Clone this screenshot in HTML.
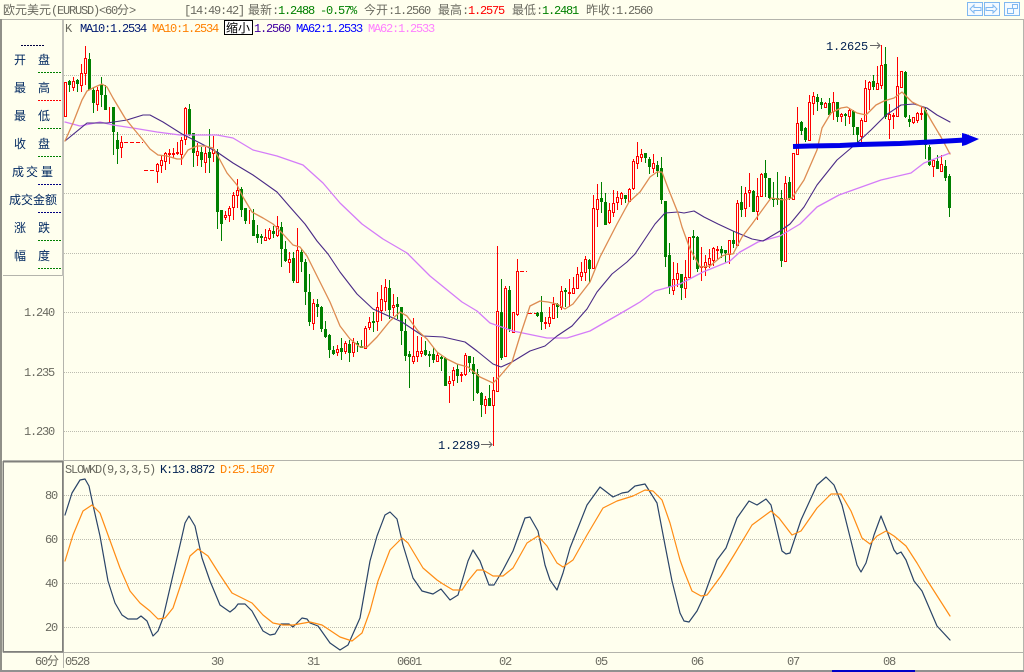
<!DOCTYPE html>
<html lang="zh">
<head>
<meta charset="utf-8">
<title>欧元美元(EURUSD)</title>
<style>
html,body{margin:0;padding:0;background:#ffffee;width:1024px;height:672px;overflow:hidden}
svg{display:block;position:absolute;left:0;top:0}
polyline{stroke-linejoin:round;stroke-linecap:round}
.m{font-family:"Liberation Mono","DejaVu Sans Mono",monospace;font-size:12px;letter-spacing:-1.2px}
.c{font-family:"WenQuanYi Zen Hei","Noto Sans CJK SC",sans-serif;font-size:12px}
.g{fill:#6a6a60}
.n{fill:#002050}
</style>
</head>
<body>
<svg width="1024" height="672" viewBox="0 0 1024 672" xmlns="http://www.w3.org/2000/svg">
<rect width="1024" height="672" fill="#ffffee"/>

<!-- frame -->
<g shape-rendering="crispEdges" fill="none" stroke="#b4b4ac">
<path d="M0 19.5H1024"/>
<path d="M63.5 20V652"/>
<path d="M3 275.5H63"/>
<path d="M3 460.5H1024"/>
<path d="M3 652.5H1024"/>
<path d="M63.5 652V668"/>
<path d="M1023.5 20V670"/>
</g>
<g shape-rendering="crispEdges">
<rect x="0" y="19" width="2" height="653" fill="#909088"/>
<rect x="62" y="20" width="2" height="256" fill="#c0c0b8"/>
<rect x="0" y="670" width="1024" height="2" fill="#909090"/>
<rect x="832" y="670" width="83" height="2" fill="#0000c8"/>
<rect x="3" y="461.5" width="59.5" height="190" fill="none" stroke="#80807c" stroke-width="1.5"/>
</g>

<!-- grid -->
<g fill="none" stroke="#bcbcb0" stroke-dasharray="1 1" shape-rendering="crispEdges">
<path d="M64 75.5H1023M64 134.5H1023M64 193.5H1023M64 253.5H1023M64 312.5H1023M64 372.5H1023M64 431.5H1023"/>
<path d="M64 495.5H1023M64 539.5H1023M64 583.5H1023M64 627.5H1023"/>
</g>

<!-- green wicks -->
<path shape-rendering="crispEdges" fill="none" stroke="#008000" stroke-width="1" d="M69.5 80V92M77.5 79V92M89.5 53V90M93.5 87V113M101.5 77V107M105.5 85V110M113.5 107V155M117.5 132V164M189.5 104V136M193.5 133V167M201.5 147V167M209.5 129V173M217.5 149V229M221.5 210V241M241.5 187V217M245.5 208V224M253.5 209V236M257.5 225V243M261.5 234V244M273.5 226V238M281.5 222V267M285.5 241V262M293.5 252V283M301.5 249V272M305.5 259V305M309.5 274V326M317.5 299V317M321.5 306V332M325.5 321V338M329.5 334V358M333.5 346V355M341.5 338V360M349.5 340V362M357.5 341V352M361.5 340V348M373.5 312V332M389.5 280V319M397.5 297V319M401.5 307V345M405.5 319V361M409.5 351V388M425.5 341V356M429.5 351V367M433.5 347V363M441.5 356V371M445.5 357V386M457.5 364V383M469.5 356V372M473.5 357V401M477.5 369V394M481.5 392V417M489.5 385V406M501.5 279V360M509.5 286V332M537.5 312V317M541.5 296V330M557.5 303V318M565.5 288V307M589.5 259V283M601.5 182V213M605.5 193V225M625.5 195V203M645.5 153V163M649.5 157V174M657.5 161V177M661.5 157V204M665.5 201V267M669.5 243V294M681.5 274V300M693.5 230V260M697.5 236V272M721.5 246V258M725.5 250V263M733.5 231V248M741.5 186V217M753.5 190V212M765.5 160V197M769.5 178V199M773.5 182V207M777.5 172V205M781.5 190V267M789.5 177V200M801.5 121V135M805.5 127V142M817.5 94V111M821.5 98V109M829.5 98V115M837.5 102V122M845.5 113V126M853.5 110V135M857.5 127V142M873.5 75V90M885.5 47V119M905.5 71V118M909.5 115V127M925.5 108V159M929.5 145V166M937.5 155V169M945.5 160V181M949.5 174V217"/>
<!-- green bodies -->
<path shape-rendering="crispEdges" fill="none" stroke="#008000" stroke-width="3" d="M69.5 81V85M77.5 80V84M89.5 59V90M93.5 90V103M101.5 85V95M105.5 95V110M113.5 107V132M117.5 140V149M189.5 109V135M193.5 133V153M201.5 152V160M209.5 152V158M217.5 152V212M221.5 210V224M241.5 189V210M245.5 208V221M253.5 220V236M257.5 234V238M261.5 236V238M273.5 231V234M281.5 227V249M285.5 249V261M293.5 258V281M301.5 252V262M305.5 262V292M309.5 292V322M317.5 304V307M321.5 307V329M325.5 329V337M329.5 335V350M333.5 350V354M341.5 348V352M349.5 344V353M357.5 343V345M361.5 346V348M373.5 321V323M389.5 288V310M397.5 304V307M401.5 307V331M405.5 331V356M409.5 354V357M425.5 350V355M429.5 354V356M433.5 354V360M441.5 357V359M445.5 358V386M457.5 369V376M469.5 356V363M473.5 364V374M477.5 374V393M481.5 393V405M489.5 398V406M501.5 312V358M509.5 290V329M537.5 313V316M541.5 312V322M557.5 304V307M565.5 290V292M589.5 260V269M601.5 198V202M605.5 202V225M625.5 195V199M645.5 153V158M649.5 159V167M657.5 165V171M661.5 168V200M665.5 201V257M669.5 255V287M681.5 274V288M693.5 236V238M697.5 237V269M721.5 249V253M725.5 250V253M733.5 240V244M741.5 202V210M753.5 191V212M765.5 173V178M769.5 178V198M773.5 198V200M777.5 198V200M781.5 198V261M789.5 182V198M801.5 122V131M805.5 128V140M817.5 97V102M821.5 102V105M829.5 103V115M837.5 102V117M845.5 114V116M853.5 111V127M857.5 127V135M873.5 81V87M885.5 64V117M905.5 72V117M909.5 119V122M925.5 110V145M929.5 147V165M937.5 161V169M945.5 166V178M949.5 176V208"/>
<!-- red wicks -->
<path shape-rendering="crispEdges" fill="none" stroke="#ff0000" stroke-width="1" d="M73.5 77V91M81.5 64V92M85.5 46V85M97.5 87V111M109.5 107V122M121.5 136V158M157.5 163V183M161.5 155V173M165.5 152V170M169.5 149V164M173.5 148V158M177.5 142V155M181.5 137V165M185.5 107V145M197.5 143V166M205.5 147V173M213.5 136V162M225.5 211V220M229.5 206V222M233.5 192V220M237.5 179V208M249.5 210V224M265.5 229V241M269.5 228V240M277.5 216V237M289.5 252V273M297.5 228V282M313.5 299V330M337.5 345V356M345.5 341V354M353.5 338V357M365.5 326V349M369.5 317V330M377.5 292V331M381.5 285V321M385.5 279V311M393.5 294V316M413.5 318V364M417.5 336V362M421.5 337V357M437.5 352V361M449.5 376V403M453.5 367V386M461.5 372V382M465.5 353V376M485.5 396V414M493.5 377V446M497.5 246V391M505.5 286V357M513.5 312V332M517.5 259V316M545.5 317V329M549.5 307V327M553.5 297V319M561.5 286V310M569.5 279V307M573.5 277V294M577.5 267V289M581.5 262V281M585.5 256V281M593.5 195V268M597.5 184V227M609.5 203V224M613.5 190V217M617.5 191V210M621.5 192V205M629.5 188V202M633.5 159V190M637.5 142V169M641.5 149V162M653.5 154V173M673.5 262V295M677.5 263V287M685.5 260V298M689.5 237V277M701.5 247V281M705.5 255V276M709.5 249V268M713.5 247V266M717.5 246V259M729.5 240V264M737.5 200V245M745.5 187V217M749.5 173V207M757.5 178V220M761.5 173V197M785.5 176V261M793.5 153V200M797.5 107V154M809.5 95V140M813.5 92V115M825.5 102V108M833.5 92V120M841.5 113V122M849.5 108V124M861.5 118V142M865.5 80V122M869.5 81V110M877.5 66V90M881.5 45V89M889.5 104V139M893.5 113V129M897.5 57V116M901.5 71V88M913.5 117V124M917.5 112V123M921.5 107V120M933.5 160V177M941.5 155V172"/>
<!-- red hollow bodies -->
<path shape-rendering="crispEdges" fill="#ffffee" stroke="#ff0000" stroke-width="1" d="M64.5 82.5h2V116.5h-2zM72.5 81.5h2V87.5h-2zM80.5 73.5h2V85.5h-2zM84.5 58.5h2V73.5h-2zM96.5 90.5h2V104.5h-2zM120.5 142.5h2V147.5h-2zM156.5 164.5h2V171.5h-2zM160.5 160.5h2V165.5h-2zM164.5 153.5h2V161.5h-2zM168.5 153.5h2V154.5h-2zM172.5 153.5h2V154.5h-2zM176.5 152.5h2V153.5h-2zM180.5 140.5h2V154.5h-2zM184.5 108.5h2V139.5h-2zM196.5 151.5h2V155.5h-2zM204.5 153.5h2V162.5h-2zM212.5 149.5h2V153.5h-2zM224.5 215.5h2V217.5h-2zM228.5 208.5h2V215.5h-2zM232.5 195.5h2V207.5h-2zM236.5 190.5h2V195.5h-2zM264.5 237.5h2V240.5h-2zM268.5 230.5h2V238.5h-2zM276.5 226.5h2V235.5h-2zM288.5 259.5h2V262.5h-2zM296.5 250.5h2V282.5h-2zM312.5 303.5h2V323.5h-2zM336.5 349.5h2V352.5h-2zM344.5 343.5h2V351.5h-2zM352.5 342.5h2V352.5h-2zM364.5 328.5h2V348.5h-2zM368.5 322.5h2V327.5h-2zM376.5 307.5h2V321.5h-2zM380.5 299.5h2V310.5h-2zM384.5 287.5h2V301.5h-2zM392.5 305.5h2V307.5h-2zM412.5 356.5h2V361.5h-2zM416.5 351.5h2V356.5h-2zM420.5 351.5h2V353.5h-2zM436.5 355.5h2V361.5h-2zM448.5 381.5h2V383.5h-2zM452.5 370.5h2V380.5h-2zM460.5 374.5h2V375.5h-2zM464.5 355.5h2V374.5h-2zM484.5 399.5h2V405.5h-2zM492.5 390.5h2V405.5h-2zM496.5 311.5h2V391.5h-2zM504.5 288.5h2V356.5h-2zM512.5 312.5h2V332.5h-2zM516.5 271.5h2V314.5h-2zM544.5 322.5h2V323.5h-2zM548.5 317.5h2V323.5h-2zM552.5 304.5h2V318.5h-2zM560.5 291.5h2V307.5h-2zM568.5 292.5h2V293.5h-2zM572.5 288.5h2V293.5h-2zM576.5 274.5h2V288.5h-2zM580.5 272.5h2V276.5h-2zM584.5 259.5h2V272.5h-2zM592.5 208.5h2V268.5h-2zM596.5 199.5h2V209.5h-2zM608.5 210.5h2V222.5h-2zM612.5 203.5h2V212.5h-2zM616.5 197.5h2V202.5h-2zM620.5 193.5h2V198.5h-2zM628.5 189.5h2V201.5h-2zM632.5 161.5h2V188.5h-2zM636.5 156.5h2V163.5h-2zM640.5 154.5h2V157.5h-2zM652.5 163.5h2V168.5h-2zM672.5 279.5h2V290.5h-2zM676.5 273.5h2V279.5h-2zM684.5 277.5h2V288.5h-2zM688.5 237.5h2V277.5h-2zM700.5 266.5h2V267.5h-2zM704.5 262.5h2V267.5h-2zM708.5 258.5h2V264.5h-2zM712.5 248.5h2V260.5h-2zM716.5 249.5h2V250.5h-2zM728.5 240.5h2V254.5h-2zM736.5 203.5h2V245.5h-2zM744.5 193.5h2V208.5h-2zM748.5 190.5h2V192.5h-2zM756.5 196.5h2V211.5h-2zM760.5 174.5h2V196.5h-2zM784.5 183.5h2V261.5h-2zM792.5 153.5h2V199.5h-2zM796.5 123.5h2V154.5h-2zM808.5 102.5h2V140.5h-2zM812.5 96.5h2V103.5h-2zM824.5 103.5h2V107.5h-2zM832.5 102.5h2V111.5h-2zM840.5 114.5h2V116.5h-2zM848.5 110.5h2V116.5h-2zM860.5 120.5h2V136.5h-2zM864.5 88.5h2V121.5h-2zM868.5 82.5h2V89.5h-2zM876.5 83.5h2V89.5h-2zM880.5 65.5h2V85.5h-2zM888.5 114.5h2V119.5h-2zM892.5 115.5h2V116.5h-2zM896.5 86.5h2V116.5h-2zM900.5 71.5h2V87.5h-2zM912.5 117.5h2V122.5h-2zM916.5 113.5h2V120.5h-2zM920.5 113.5h2V114.5h-2zM932.5 160.5h2V166.5h-2zM940.5 164.5h2V171.5h-2z"/>
<!-- flat dashes -->
<path shape-rendering="crispEdges" fill="none" stroke="#ff0000" stroke-dasharray="4 2" d="M124 142.5H143M144 170.5H157M520 271.5H527M528 313.5H536"/>

<!-- MA62 pink -->
<polyline fill="none" stroke="#d47cf8" stroke-width="1.3" points="65,122 80,126 100,122 113,125 133,128 157,132 180,135 217,135 233,138 253,150 277,156 303,165 323,183 340,203 362,224 383,239 407,253 430,276 462,302 477,311 490,323 513,331 547,338 567,338 590,331 623,312 640,302 655,291 680,284 703,272 730,261 740,252 758,242 780,236 800,224 817,207 839,195 881,180 911,173 924,163 950,153"/>
<!-- MA purple -->
<polyline fill="none" stroke="#4a2a86" stroke-width="1.1" points="65,141 87,123 107,123 127,120 143,115 150,115 163,122 182,134 200,143 217,152 233,163 253,175 277,192 290,207 305,224 317,241 328,254 340,272 357,294 373,309 402,322 423,336 443,337 465,342 477,351 493,364 501,367 512,362 530,351 545,346 557,336 572,326 587,309 597,292 612,274 627,262 635,254 655,224 665,213 678,212 684,213 694,211 704,217 718,224 733,231 752,239 763,241 780,231 790,224 804,207 817,185 837,160 857,143 871,130 886,115 901,105 914,104 927,108 937,115 950,122"/>
<!-- MA10 brown-orange -->
<polyline fill="none" stroke="#dd8c52" stroke-width="1.3" points="65,141 73,123 82,100 87,91 95,87 102,84 107,87 113,98 125,118 133,128 143,140 150,149 158,155 167,156 177,159 182,159 188,150 197,146 205,146 213,148 220,160 227,173 237,185 243,197 252,212 263,218 273,224 283,234 293,245 300,247 307,256 320,282 330,302 340,326 350,339 360,347 367,347 377,337 390,321 400,312 407,316 418,331 427,339 437,352 447,359 457,364 468,367 480,377 493,383 500,376 512,362 520,336 530,306 540,301 548,302 557,304 565,309 573,304 590,282 600,257 617,224 629,202 640,192 650,177 657,172 662,172 668,188 678,213 682,227 690,249 700,267 710,266 722,256 728,254 733,254 742,237 752,224 771,198 784,200 792,198 804,180 817,150 822,128 831,113 841,108 847,107 857,113 866,115 876,105 884,101 894,98 902,92 912,102 924,108 932,122 941,137 950,154"/>

<!-- blue arrow -->
<path fill="none" stroke="#0000e8" stroke-width="5" d="M793 146.5L810 146L840 145.5L860 144.5L900 143.5L930 142L965 140"/>
<path fill="#0000e8" d="M962 133L966 134L979 139L966 145L962 146z"/>

<!-- KD lines -->
<polyline fill="none" stroke="#2a4468" stroke-width="1.2" points="65,515 72,493 80,480 85,479 89,486 93,505 100,536 108,581 115,603 122,615 128,619 137,619 141,616 147,621 153,636 158,631 163,618 173,575 180,545 185,523 189,516 195,526 202,558 210,581 220,605 230,612 235,608 238,604 245,604 252,611 263,631 270,635 275,634 281,624 289,624 293,627 302,618 307,619 310,623 318,626 330,643 340,650 348,645 360,618 370,561 377,536 385,515 390,512 397,519 403,545 413,578 422,591 433,594 441,589 450,600 458,595 468,561 473,550 480,561 489,585 494,585 503,570 513,551 525,518 530,517 538,531 545,565 550,580 557,590 563,573 570,548 587,505 600,487 613,497 622,493 628,492 635,486 645,484 657,503 665,545 672,581 680,613 684,621 689,622 697,611 704,596 717,560 726,548 737,518 749,501 757,505 766,499 771,505 782,551 786,554 790,553 801,520 817,485 826,477 834,485 842,505 857,565 861,572 866,563 874,535 881,516 887,531 894,550 897,554 901,552 906,560 914,581 922,591 937,626 950,640"/>
<polyline fill="none" stroke="#ff8c14" stroke-width="1.2" points="65,561 73,535 83,511 92,505 100,513 108,535 120,568 130,591 140,603 150,611 158,619 165,618 173,608 182,581 190,556 198,549 208,556 220,575 232,593 240,597 252,603 263,615 273,623 283,625 293,625 310,622 322,625 340,637 352,641 362,633 370,611 378,581 390,550 402,538 408,543 423,568 437,580 443,584 453,590 462,590 468,581 477,570 483,570 493,576 503,576 513,568 527,543 538,536 547,546 557,563 563,567 573,560 587,535 603,508 617,501 633,496 645,490 653,491 662,500 670,523 680,560 684,571 692,591 701,596 707,595 721,576 734,555 752,525 771,511 779,518 792,535 801,531 817,508 831,494 841,494 851,511 862,538 870,544 877,536 886,531 894,536 906,546 917,563 927,580 950,616"/>

<!-- header text -->
<g>
<text class="c g" x="3" y="14">欧元美元</text><text class="m g" x="51" y="14">(EURUSD)</text><text class="m g" x="99" y="14">&lt;60</text><text class="c g" x="117" y="14">分</text><text class="m g" x="129" y="14">&gt;</text>
<text class="m g" x="184" y="14">[14:49:42]</text>
<text class="c g" x="248" y="14">最新</text><text class="m g" x="272" y="14">:</text><text class="m" fill="#008000" x="278" y="14">1.2488</text>
<text class="m" fill="#008000" x="320" y="14">-0.57%</text>
<text class="c g" x="364" y="14">今开</text><text class="m g" x="388" y="14">:1.2560</text>
<text class="c g" x="438" y="14">最高</text><text class="m g" x="462" y="14">:</text><text class="m" fill="#ff0000" x="468" y="14">1.2575</text>
<text class="c g" x="512" y="14">最低</text><text class="m g" x="536" y="14">:</text><text class="m" fill="#008000" x="542" y="14">1.2481</text>
<text class="c g" x="586" y="14">昨收</text><text class="m g" x="610" y="14">:1.2560</text>
</g>

<!-- window icons -->
<g fill="none" stroke="#80b8f0" shape-rendering="crispEdges">
<rect x="967.5" y="2.5" width="15" height="13" fill="#f4faff"/>
<rect x="984.5" y="2.5" width="15" height="13" fill="#f4faff"/>
<rect x="1004.5" y="2.5" width="15" height="13" fill="#f4faff"/>
<rect x="1012.5" y="4.5" width="5" height="4"/>
<rect x="1007.5" y="8.5" width="6" height="5" fill="#f4faff"/>
</g>
<path fill="none" stroke="#80b8f0" d="M970 9l4-4v2.500h7v3h-7v2.500zM997 9l-4-4v2.500h-7v3h7v2.500z"/>

<!-- legend -->
<text class="m g" x="65" y="32">K</text>
<text class="m" fill="#001a70" x="80" y="32">MA10:1.2534</text>
<text class="m" fill="#ff8000" x="152" y="32">MA10:1.2534</text>
<rect x="224.500" y="20.500" width="28" height="14" fill="#ffffff" stroke="#000000" shape-rendering="crispEdges"/>
<text class="c" fill="#000000" x="226" y="32">缩小</text>
<text class="m" fill="#4000a0" x="254" y="32">1.2560</text>
<text class="m" fill="#0000ff" x="296" y="32">MA62:1.2533</text>
<text class="m" fill="#ff80ff" x="368" y="32">MA62:1.2533</text>

<!-- side panel -->
<g shape-rendering="crispEdges" fill="none">
<path stroke="#000040" stroke-dasharray="2 1" d="M21 45.500H44"/>
<path stroke="#008000" stroke-dasharray="2 1" d="M38 72.500H62M38 128.500H62M38 156.500H62M38 240.500H62M38 268.500H62"/>
<path stroke="#ff0000" stroke-dasharray="2 1" d="M38 100.500H62"/>
<path stroke="#000080" stroke-dasharray="2 1" d="M38 184.500H62M38 212.500H62"/>
</g>
<g class="c" fill="#002860">
<text class="c" fill="#002860" x="14" y="64">开</text><text class="c" fill="#002860" x="38" y="64">盘</text>
<text class="c" fill="#002860" x="14" y="92">最</text><text class="c" fill="#002860" x="38" y="92">高</text>
<text class="c" fill="#002860" x="14" y="120">最</text><text class="c" fill="#002860" x="38" y="120">低</text>
<text class="c" fill="#002860" x="14" y="148">收</text><text class="c" fill="#002860" x="38" y="148">盘</text>
<text class="c" fill="#002860" x="12" y="176">成</text><text class="c" fill="#002860" x="26" y="176">交</text><text class="c" fill="#002860" x="41" y="176">量</text>
<text class="c" fill="#002860" x="9" y="204">成交金额</text>
<text class="c" fill="#002860" x="14" y="232">涨</text><text class="c" fill="#002860" x="38" y="232">跌</text>
<text class="c" fill="#002860" x="14" y="260">幅</text><text class="c" fill="#002860" x="38" y="260">度</text>
</g>

<!-- axes -->
<text class="m g" x="24" y="316">1.240</text>
<text class="m g" x="24" y="376">1.235</text>
<text class="m g" x="24" y="435">1.230</text>
<text class="m g" x="45" y="499">80</text>
<text class="m g" x="45" y="543">60</text>
<text class="m g" x="45" y="587">40</text>
<text class="m g" x="45" y="631">20</text>

<!-- extreme labels -->
<text class="m n" style="letter-spacing:-.2px" x="826" y="50">1.2625</text>
<path fill="none" stroke="#666" d="M870 45.500H880M877 42.500l3 3-3 3"/>
<text class="m n" style="letter-spacing:-.2px" x="438" y="449">1.2289</text>
<path fill="none" stroke="#666" d="M481 444.500H492M489 441.500l3 3-3 3"/>

<!-- KD legend -->
<text class="m g" x="65" y="473">SLOWKD(9,3,3,5)</text>
<text class="m" fill="#002050" x="160" y="473">K:13.8872</text>
<text class="m" fill="#ff8000" x="220" y="473">D:25.1507</text>

<!-- bottom axis -->
<text class="m g" x="35" y="665">60</text><text class="c g" x="47" y="665">分</text>
<text class="m g" x="65" y="665">0528</text>
<text class="m g" x="211" y="665">30</text>
<text class="m g" x="307" y="665">31</text>
<text class="m g" x="397" y="665">0601</text>
<text class="m g" x="499" y="665">02</text>
<text class="m g" x="595" y="665">05</text>
<text class="m g" x="691" y="665">06</text>
<text class="m g" x="787" y="665">07</text>
<text class="m g" x="883" y="665">08</text>
</svg>
</body>
</html>
